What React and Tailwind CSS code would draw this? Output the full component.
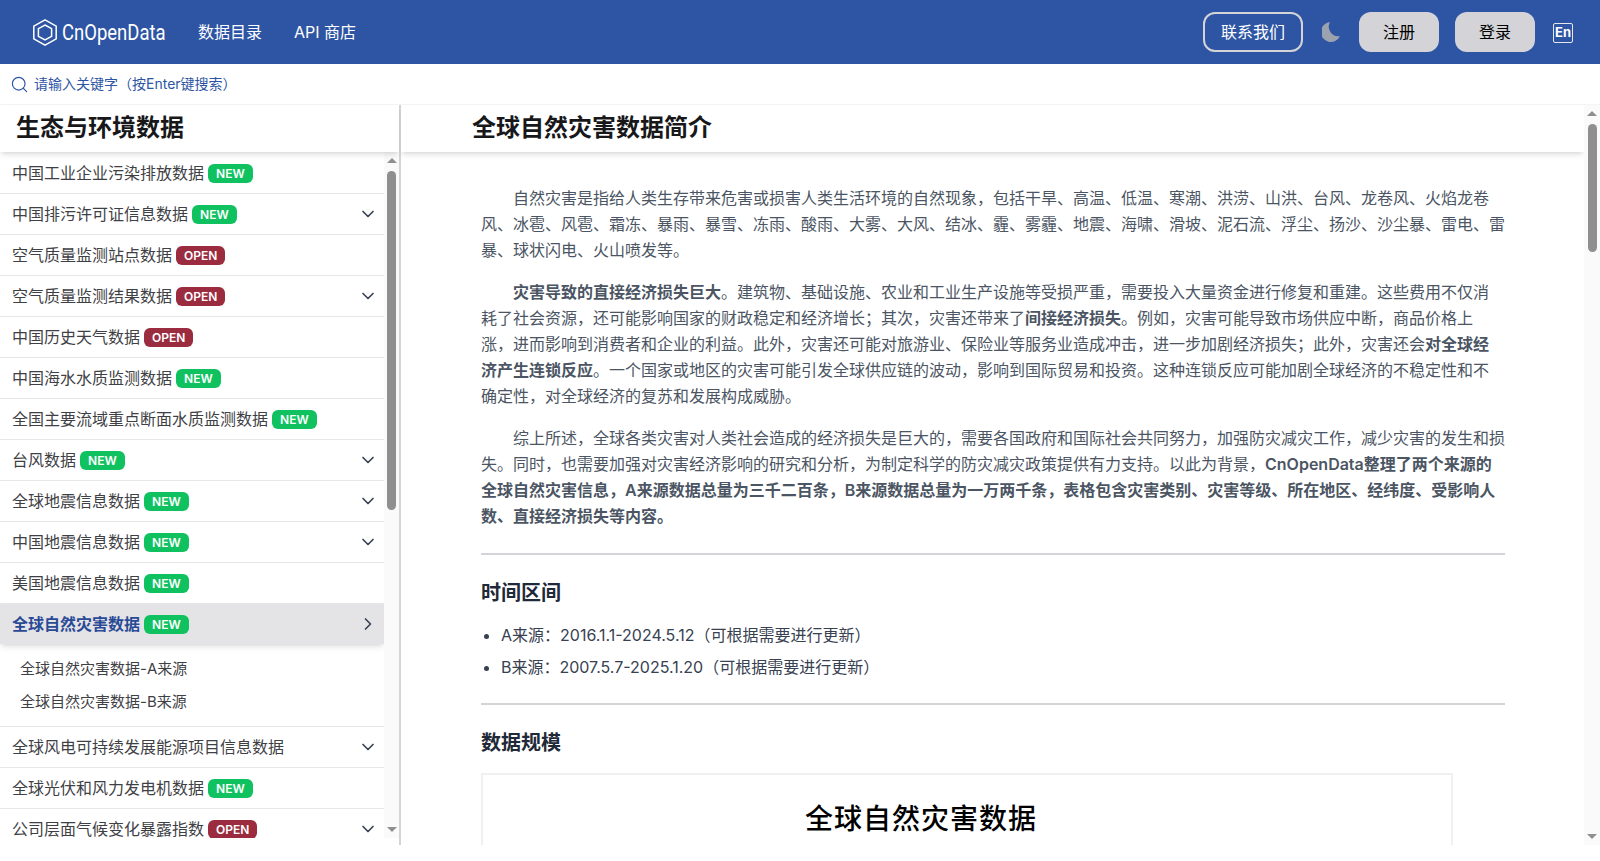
import React from 'react';
import { ChevronDown, ChevronRight, Search } from 'lucide-react';

const rows = [
  { name: '中国工业企业污染排放数据', tag: 'NEW' },
  { name: '中国排污许可证信息数据', tag: 'NEW', more: true },
  { name: '空气质量监测站点数据', tag: 'OPEN' },
  { name: '空气质量监测结果数据', tag: 'OPEN', more: true },
  { name: '中国历史天气数据', tag: 'OPEN' },
  { name: '中国海水水质监测数据', tag: 'NEW' },
  { name: '全国主要流域重点断面水质监测数据', tag: 'NEW' },
  { name: '台风数据', tag: 'NEW', more: true },
  { name: '全球地震信息数据', tag: 'NEW', more: true },
  { name: '中国地震信息数据', tag: 'NEW', more: true },
  { name: '美国地震信息数据', tag: 'NEW' },
  { name: '全球自然灾害数据', tag: 'NEW', active: true, subs: ['全球自然灾害数据-A来源', '全球自然灾害数据-B来源'] },
  { name: '全球风电可持续发展能源项目信息数据', more: true },
  { name: '全球光伏和风力发电机数据', tag: 'NEW' },
  { name: '公司层面气候变化暴露指数', tag: 'OPEN', more: true },
];

const ScrollTrack = ({ className, thumbTop, thumbHeight }) => (
  <div className={`flex shrink-0 flex-col items-center bg-[#fafafa] ${className}`}>
    <div className="mt-[6px] h-0 w-0 border-x-[5px] border-b-[5px] border-x-transparent border-b-[#8f8f8f]"></div>
    <div className="w-[9px] rounded-full bg-[#8f8f8f]" style={{ marginTop: thumbTop, height: thumbHeight }}></div>
    <div className="mt-auto mb-[6px] h-0 w-0 border-x-[5px] border-t-[5px] border-x-transparent border-t-[#8f8f8f]"></div>
  </div>
);

const Tag = ({ tag }) => (
  <span className={`ml-1 rounded-md px-2 text-xs leading-[19px] font-semibold text-white ${tag === 'NEW' ? 'bg-[#10c25f]' : 'bg-[#9b2c3f]'}`}>
    {tag}
  </span>
);

const Row = ({ row }) => {
  if (row.active) {
    return (
      <div className="border-b border-gray-200">
        <div className="flex h-10 items-center justify-between bg-[#e4e4e7] pr-[6px] pl-3 shadow-md">
          <div className="flex items-center font-semibold text-[#2a4a96]">
            {row.name}
            <Tag tag={row.tag} />
          </div>
          <ChevronRight size={20} className="text-gray-700" />
        </div>
        <div className="py-2 pl-5 text-[15px] leading-[33px] text-[#3f3f46]">
          {row.subs.map((s) => (
            <div key={s}>{s}</div>
          ))}
        </div>
      </div>
    );
  }
  return (
    <div className="flex h-[41px] items-center justify-between border-b border-gray-200 pr-[6px] pl-3 text-[#3f3f46]">
      <div className="flex items-center">
        {row.name}
        {row.tag && <Tag tag={row.tag} />}
      </div>
      {row.more && <ChevronDown size={20} className="text-gray-700" />}
    </div>
  );
};

export default function App() {
  return (
    <div className="flex h-screen flex-col overflow-hidden bg-white font-['Inter','Noto_Sans_CJK_SC',sans-serif]">
      <header className="flex h-16 shrink-0 items-center bg-[#2e55a3] pr-[27px] pl-[33px] text-white">
        <svg width="24" height="27" viewBox="0 0 24 27" fill="none" stroke="#fff" strokeWidth="1.5">
          <path d="M12 .9 23.2 7.2V19.8L12 26.1.8 19.8V7.2Z" />
          <path d="M12 6 18.6 9.7V17.3L12 21 5.4 17.3V9.7Z" />
        </svg>
        <span className="ml-[5px] w-[104px] origin-left scale-x-[0.84] font-['Roboto',sans-serif] text-[22px] whitespace-nowrap text-white">CnOpenData</span>
        <nav className="ml-8 flex gap-8">
          <span>数据目录</span>
          <span>API 商店</span>
        </nav>
        <div className="ml-auto flex items-center">
          <button className="h-10 w-[100px] rounded-xl border-2 border-[#d4d4d8] text-white">联系我们</button>
          <svg className="mx-[19px]" width="18" height="20" viewBox="0 0 18 20" fill="#9ca3af">
            <path d="M8 0A10 10 0 1 0 18 14 9.5 9.5 0 0 1 8 0Z" />
          </svg>
          <button className="h-10 w-20 rounded-xl bg-[#d4d4d8] text-black">注册</button>
          <button className="ml-4 h-10 w-20 rounded-xl bg-[#d4d4d8] text-black">登录</button>
          <span className="mt-0.5 ml-[18px] flex h-5 w-5 items-center justify-center rounded-[2px] border-[1.5px] border-[#e5e7eb] text-[13px] font-bold">En</span>
        </div>
      </header>

      <div className="relative flex h-[41px] shrink-0 items-center gap-[5px] border-b border-gray-100 pl-[10px] text-sm text-[#2e55a3]">
        <Search size={19} strokeWidth={1.5} />
        <input className="w-80 outline-none placeholder:text-[#2e55a3]" placeholder="请输入关键字（按Enter键搜索）" />
      </div>

      <div className="flex h-[740px] shrink-0">
        <aside className="flex w-[401px] shrink-0 flex-col border-r-2 border-[#d4d4d8]">
          <h2 className="relative z-10 flex h-[47px] shrink-0 items-center bg-white pb-0.5 pl-4 text-2xl font-bold text-[#18181b] shadow-md">生态与环境数据</h2>
          <div className="flex h-[686px]">
            <div className="flex-1 overflow-hidden pt-px">
              {rows.map((row) => (
                <Row key={row.name} row={row} />
              ))}
            </div>
            <ScrollTrack className="w-[15px]" thumbTop={8} thumbHeight={339} />
          </div>
        </aside>

        <div className="flex flex-1">
          <main className="flex-1 overflow-hidden">
            <h1 className="relative z-10 flex h-[47px] items-center bg-white pb-0.5 pl-[71px] text-2xl font-bold text-[#18181b] shadow-md">全球自然灾害数据简介</h1>
            <article className="pt-[33px] pr-[79px] pl-[80px] text-[#4b5563]">
              <p className="mb-4 indent-8 leading-[26px]">
                自然灾害是指给人类生存带来危害或损害人类生活环境的自然现象，包括干旱、高温、低温、寒潮、洪涝、山洪、台风、龙卷风、火焰龙卷风、冰雹、风雹、霜冻、暴雨、暴雪、冻雨、酸雨、大雾、大风、结冰、霾、雾霾、地震、海啸、滑坡、泥石流、浮尘、扬沙、沙尘暴、雷电、雷暴、球状闪电、火山喷发等。
              </p>
              <p className="mb-4 indent-8 leading-[26px]">
                <b className="font-semibold">灾害导致的直接经济损失巨大</b>。建筑物、基础设施、农业和工业生产设施等受损严重，需要投入大量资金进行修复和重建。这些费用不仅消耗了社会资源，还可能影响国家的财政稳定和经济增长；其次，灾害还带来了<b className="font-semibold">间接经济损失</b>。例如，灾害可能导致市场供应中断，商品价格上涨，进而影响到消费者和企业的利益。此外，灾害还可能对旅游业、保险业等服务业造成冲击，进一步加剧经济损失；此外，灾害还会<b className="font-semibold">对全球经济产生连锁反应</b>。一个国家或地区的灾害可能引发全球供应链的波动，影响到国际贸易和投资。这种连锁反应可能加剧全球经济的不稳定性和不确定性，对全球经济的复苏和发展构成威胁。
              </p>
              <p className="indent-8 leading-[26px]">
                综上所述，全球各类灾害对人类社会造成的经济损失是巨大的，需要各国政府和国际社会共同努力，加强防灾减灾工作，减少灾害的发生和损失。同时，也需要加强对灾害经济影响的研究和分析，为制定科学的防灾减灾政策提供有力支持。以此为背景，<b className="font-semibold">CnOpenData整理了两个来源的全球自然灾害信息，A来源数据总量为三千二百条，B来源数据总量为一万两千条，表格包含灾害类别、灾害等级、所在地区、经纬度、受影响人数、直接经济损失等内容。</b>
              </p>
              <hr className="mt-6 border-t-2 border-[#d4d4d8]" />
              <h3 className="mt-6 text-xl leading-7 font-semibold text-[#1f2937]">时间区间</h3>
              <ul className="mt-3 list-disc pl-5 leading-8 text-[#374151]">
                <li>A来源：2016.1.1-2024.5.12（可根据需要进行更新）</li>
                <li>B来源：2007.5.7-2025.1.20（可根据需要进行更新）</li>
              </ul>
              <hr className="mt-5 border-t-2 border-[#d4d4d8]" />
              <h3 className="mt-6 text-xl leading-7 font-semibold text-[#1f2937]">数据规模</h3>
              <div className="mt-4 h-[300px] w-[972px] border-2 border-[#f0f0f0] pt-[26px] pl-[322px]">
                <div className="text-[28px] leading-9 font-medium tracking-[1px] text-black">全球自然灾害数据</div>
              </div>
            </article>
          </main>
          <ScrollTrack className="w-4" thumbTop={8} thumbHeight={128} />
        </div>
      </div>
    </div>
  );
}
